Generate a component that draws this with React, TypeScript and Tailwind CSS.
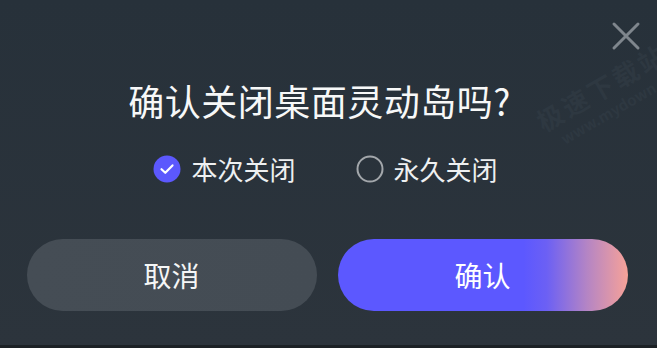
import React, { useState } from "react";

const font = { fontFamily: '"Noto Sans CJK SC", "Noto Sans", sans-serif' };

function CheckOn() {
  return (
    <svg width="28" height="28" viewBox="0 0 28 28">
      <circle cx="14" cy="14" r="13.5" fill="#5c58fd" />
      <path d="M8.5 14.2l3.8 3.6 7.2-7.4" fill="none" stroke="#fff" strokeWidth="2.2" strokeLinecap="round" strokeLinejoin="round" />
    </svg>
  );
}

function CheckOff() {
  return (
    <svg width="28" height="28" viewBox="0 0 28 28">
      <circle cx="14" cy="14" r="12.5" fill="none" stroke="#a3a7ab" strokeWidth="2" />
    </svg>
  );
}

export default function App() {
  const [mode, setMode] = useState<"once" | "forever">("once");

  return (
    <div
      className="relative w-[657px] h-[348px] overflow-hidden bg-[linear-gradient(180deg,#27313a_0%,#2c343c_100%)] text-white border-b-[3px] border-[#1c2125]"
      style={font}
    >
      {/* watermark */}
      <div className="absolute left-[532px] top-[112px] -rotate-[30deg] origin-top-left pointer-events-none select-none text-[#2e3841] leading-none">
        <div className="text-[26px] font-bold tracking-[3px]">极速下载站</div>
        <div className="text-[15px] font-bold ml-[12px] mt-[5px]">www.mydown.com</div>
      </div>

      <button className="absolute right-[16px] top-[21px] w-[30px] h-[30px] flex items-center justify-center">
        <svg width="30" height="30" viewBox="0 0 30 30">
          <path d="M3 3l24 24M27 3L3 27" stroke="#7f868d" strokeWidth="3" strokeLinecap="round" />
        </svg>
      </button>

      <div className="flex flex-col items-center pt-[77px]">
        <h1 className="text-[36px] leading-[46px] font-normal tracking-[0.5px] text-[#f7f8f8] ml-[-18px]">确认关闭桌面灵动岛吗?</h1>

        <div className="flex items-center gap-[60px] mt-[29px] ml-[-6px]">
          <button className="flex items-center gap-[10px]" onClick={() => setMode("once")}>
            {mode === "once" ? <CheckOn /> : <CheckOff />}
            <span className="text-[26px] leading-[34px] text-[#eef0f1]">本次关闭</span>
          </button>
          <button className="flex items-center gap-[10px]" onClick={() => setMode("forever")}>
            {mode === "forever" ? <CheckOn /> : <CheckOff />}
            <span className="text-[26px] leading-[34px] text-[#eef0f1]">永久关闭</span>
          </button>
        </div>

        <div className="flex gap-[21px] mt-[53px] ml-[-3px]">
          <button className="w-[290px] h-[72px] rounded-full bg-[linear-gradient(90deg,#454d55_0%,#444c54_100%)] text-[28px] text-[#f5f6f6]">
            取消
          </button>
          <button className="w-[290px] h-[72px] rounded-full bg-[linear-gradient(90deg,#5c58ff_0%,#5c58ff_64%,#6c60f4_72%,#b585c4_86%,#f7a298_100%)] text-[28px] text-white">
            确认
          </button>
        </div>
      </div>
    </div>
  );
}
